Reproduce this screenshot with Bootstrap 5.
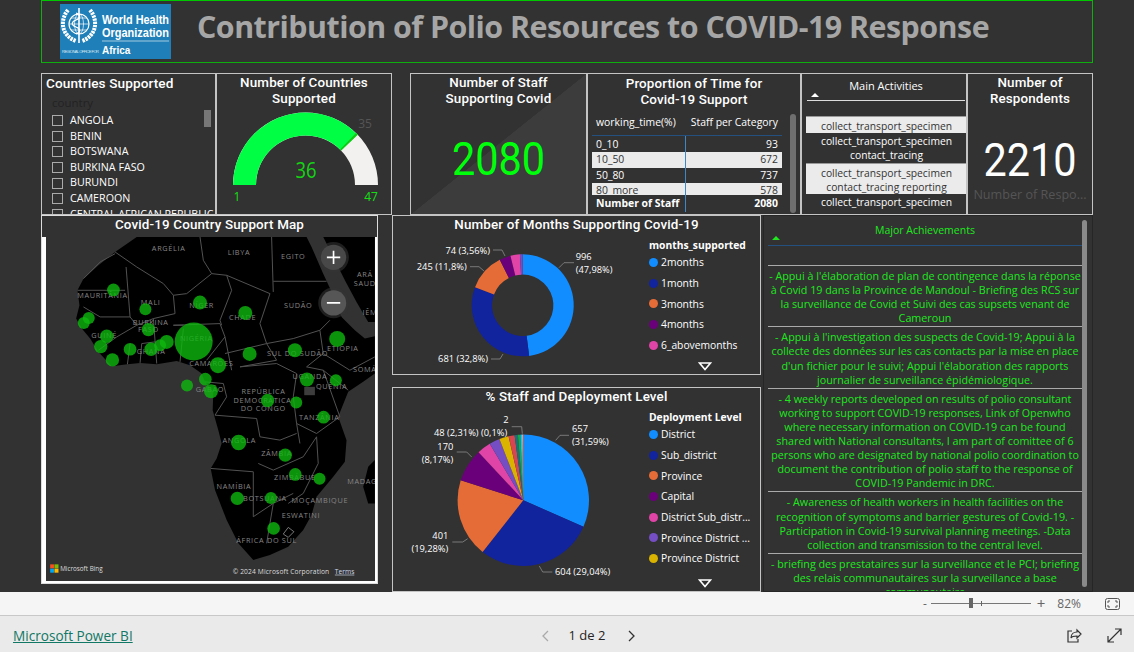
<!DOCTYPE html>
<html lang="en">
<head>
  <meta charset="UTF-8">
  <meta name="viewport" content="width=device-width, initial-scale=1.0">
  <title>Contribution of Polio Resources to COVID-19 Response</title>
  <link href="https://cdn.jsdelivr.net/npm/bootstrap@5.3.0/dist/css/bootstrap.min.css" rel="stylesheet">
  <style>
    html, body { height: 652px; overflow: hidden; }
    body { background: #323232; font-family: "Open Sans", sans-serif; color: #fff; }
    .report { height: 592px; padding-left: 41px; width: 1093px; box-sizing: content-box; overflow: hidden; }
    .report-head { height: 63px; width: 1052px; border: 1px solid #0fae0f; border-top-color: #00c800; padding-left: 18px; }
    .report-title { font-size: 30.4px; letter-spacing: -.52px; font-weight: 700; color: #a6a6a6; margin: 0 0 9px 26px; white-space: nowrap; }
    .row-top { height: 142px; margin-top: 10px; }
    .row-main { height: 377px; }
    .tile { border: 1px solid #c4c4c4; overflow: hidden; flex: none; }
    .tile-title { font-family: Roboto, sans-serif; font-weight: 500; font-size: 13.4px; line-height: 16px; letter-spacing: .15px; text-align: center; margin: 0; }
    .t-countries { width: 175px; padding: 1px 0 0 4px; }
    .t-gauge { width: 176px; padding-top: 1px; }
    .t-gauge svg { margin-top: 1px; }
    .t-staff { width: 177px; margin-left: 18px; padding-top: 1px; background: linear-gradient(to bottom right, #323232 50%, #3c3c3c 50.2%); }
    .t-time { width: 214px; padding-top: 2px; }
    .t-activities { width: 166px; }
    .t-respondents { width: 126px; padding-top: 1px; }
    .left-title { text-align: left; font-size: 13.6px; line-height: 17px; letter-spacing: .1px; }
    .slicer-label { color: #222; font-size: 11.5px; line-height: 14px; margin: 4px 0 3px 6px; }
    .slicer-row { height: 15.6px; font-size: 10.7px; line-height: 15.6px; padding-left: 6px; white-space: nowrap; }
    .check-box { width: 11px; height: 11px; border: 1px solid #aaa; margin-right: 7px; flex: none; }
    .slicer-thumb { width: 7px; height: 17px; background: #777; top: 36px; right: 4px; }
    .big-number { font-family: Roboto, sans-serif; font-size: 46px; line-height: 50px; text-align: center; transform: scaleX(.9); }
    .big-green { color: #00ff0a; margin-top: 27px; }
    .big-white { margin-top: 28px; }
    .big-caption { color: #555; font-size: 12.6px; line-height: 14px; margin-top: 3px; text-align: center; white-space: nowrap; }
    .time-table { width: 190px; margin: 1px 0 0 4px; font-size: 10.4px; position: relative; }
    .time-row { height: 15.4px; line-height: 15.4px; padding: 0 4px; }
    .time-head { height: 27px; line-height: 26px; border-bottom: 1px solid #24507f; margin-bottom: 1px; white-space: nowrap; padding: 0 4px; }
    .time-light { background: #ebebeb; color: #333; }
    .time-divider { width: 1px; background: #3f86c8; left: 93px; top: 27px; height: 76px; }
    .time-total { font-weight: 700; height: 18px; line-height: 17px; padding: 0 4px; }
    .time-clip-last { height: 12px; overflow: hidden; background: #ebebeb; color: #333; line-height: 15.4px; padding: 0 4px; }
    .scroll-bar { background: #6f6f6f; border-radius: 3px; }
    .sb-time { width: 6px; height: 99px; top: 40px; right: 4px; }
    .act-head { height: 27px; margin: 0 0 0 5px; width: 158px; border-bottom: 1px solid #ddd; font-size: 11px; text-align: center; line-height: 24px; position: relative; }
    .sort-up { width: 0; height: 0; border-left: 4px solid transparent; border-right: 4px solid transparent; border-bottom: 4px solid #fff; left: 4px; top: 19px; }
    .act-list { margin: 15px 0 0 4px; width: 161px; font-size: 10.3px; line-height: 14px; text-align: center; color: #fff; }
    .act-item { padding: 1px 0; white-space: nowrap; }
    .act-light { background: #ebebeb; color: #333; border-top: 1px solid #999; padding: 2px 0 0; }
    .t-map { width: 337px; height: 369px; background: #fff; border-color: #ddd; }
    .map-title { background: #323232; height: 21px; line-height: 18px; }
    .map-svg { display: block; margin: 0 3px 0 4px; background: #323232; }
    .mid-col { width: 369px; margin-left: 14px; }
    .t-months { height: 160px; }
    .t-level { height: 205px; margin-top: 12px; }
    .chart-title { height: 21px; line-height: 18px; margin-bottom: 1px; }
    .legend-col { font-size: 10.3px; line-height: 14px; width: 110px; white-space: nowrap; }
    .legend-name { font-weight: 700; }
    .legend-dot { width: 9px; height: 9px; border-radius: 50%; margin-right: 3px; flex: none; }
    .legend-item { height: 20.7px; }
    .legend-down { width: 14px; height: 9px; left: 305px; }
    .down-months { top: 146px; }
    .down-level { top: 191px; }
    .t-major { width: 330px; margin-left: 2px; color: #1fe81f; border-color: #262626; height: 377px; }
    .major-wrap { width: 314px; margin-left: 4px; font-size: 10.75px; line-height: 14.1px; text-align: center; }
    .major-head { height: 30px; line-height: 29px; font-size: 10.5px; border-bottom: 1px solid #24507f; position: relative; }
    .sort-green { border-bottom-color: #1fe81f; left: 4px; top: 20px; }
    .major-gap { height: 20px; border-bottom: 1px solid #aaa; }
    .major-item { padding: 3px 0 1px; border-bottom: 1px solid #aaa; }
    .sb-major { width: 5px; top: 4px; bottom: 4px; right: 5px; background: #8a8a8a; }
    .bar-zoom { height: 23px; background: #f5f5f5; color: #666; font-size: 12px; line-height: 1; padding-right: 14px; }
    .slider-track { width: 100px; height: 1px; background: #777; position: relative; margin: 0 6px 0 4px; }
    .slider-thumb { width: 4px; height: 10px; background: #666; left: 38px; top: -5px; }
    .slider-tick { width: 1px; height: 5px; background: #666; left: 50px; top: -2px; }
    .zoom-plus { font-size: 15px; }
    .zoom-pct { margin-left: 12px; }
    .zoom-fit { margin-left: 24px; }
    .bar-pages { height: 37px; background: #eaeaea; border-top: 1px solid #c8c8c8; color: #252423; padding: 3px 12px 0 0; }
    .pbi-link { color: #117865; font-size: 13.6px; width: 541px; padding-left: 13px; margin-top: 1px; }
    .page-label { font-size: 13px; width: 72px; margin-right: 3px; text-align: center; }
    .share-gap { margin-left: 25px; }
    .tile svg text { font-family: "Open Sans", sans-serif; }
  </style>
</head>
<body>

<div class="report">
  <div class="report-head d-flex align-items-center">
    <svg width="111" height="55" viewBox="0 0 111 55">
      <rect width="111" height="55" fill="#1f7fb8"/>
      <g fill="none" stroke="#fff">
        <circle cx="19" cy="20" r="10" stroke-width="1.2"/>
        <ellipse cx="19" cy="20" rx="4.5" ry="10" stroke-width=".7"/>
        <path d="M9 20h20M11 14h16M11 26h16" stroke-width=".7"/>
        <path d="M19 4v35" stroke-width="1.6"/>
        <path d="M16 9c5 2 5 5 0 7s-5 5 0 7 5 5 0 7" stroke-width="1.2"/>
        <path d="M8 6C-1 17 2 32 16 37M30 6c9 11 6 26-8 31" stroke-width="4" stroke-dasharray="2.4 .8"/>
      </g>
      <text x="42" y="20" font-family="Liberation Sans, sans-serif" font-size="12.6" font-weight="700" fill="#fff" textLength="67" lengthAdjust="spacingAndGlyphs">World Health</text>
      <text x="42" y="33" font-family="Liberation Sans, sans-serif" font-size="12.6" font-weight="700" fill="#fff" textLength="67" lengthAdjust="spacingAndGlyphs">Organization</text>
      <path d="M42 37h67" stroke="#fff" stroke-width=".6"/>
      <text x="2" y="49" font-family="Liberation Sans, sans-serif" font-size="4" fill="#dbe9f3" textLength="37">REGIONAL OFFICE FOR</text>
      <text x="42" y="50" font-family="Liberation Sans, sans-serif" font-size="10" font-weight="700" fill="#fff">Africa</text>
    </svg>
    <h1 class="report-title">Contribution of Polio Resources to COVID-19 Response</h1>
  </div>

  <div class="row-top d-flex">
    <div class="tile t-countries position-relative">
      <p class="tile-title left-title">Countries Supported</p>
      <div class="slicer-label">country</div>
      <div id="slicer"></div>
      <div class="slicer-thumb position-absolute"></div>
    </div>

    <div class="tile t-gauge">
      <p class="tile-title">Number of Countries<br>Supported</p>
      <svg id="gauge" width="174" height="106" viewBox="216 108 174 106" class="d-block"></svg>
    </div>

    <div class="tile t-staff">
      <p class="tile-title">Number of Staff<br>Supporting Covid</p>
      <div class="big-number big-green">2080</div>
    </div>

    <div class="tile t-time position-relative">
      <p class="tile-title">Proportion of Time for<br>Covid-19 Support</p>
      <div class="time-table">
        <div class="time-head d-flex justify-content-between"><span>working_time(%)</span><span>Staff per Category</span></div>
        <div class="time-row d-flex justify-content-between"><span>0_10</span><span>93</span></div>
        <div class="time-row time-light d-flex justify-content-between"><span>10_50</span><span>672</span></div>
        <div class="time-row d-flex justify-content-between"><span>50_80</span><span>737</span></div>
        <div class="time-clip-last d-flex justify-content-between"><span>80_more</span><span>578</span></div>
        <div class="time-total d-flex justify-content-between"><span>Number of Staff</span><span>2080</span></div>
        <div class="time-divider position-absolute"></div>
      </div>
      <div class="scroll-bar sb-time position-absolute"></div>
    </div>

    <div class="tile t-activities">
      <div class="act-head">Main Activities<span class="sort-up position-absolute"></span></div>
      <div class="act-list">
        <div class="act-item act-light">collect_transport_specimen</div>
        <div class="act-item">collect_transport_specimen<br>contact_tracing</div>
        <div class="act-item act-light">collect_transport_specimen<br>contact_tracing reporting</div>
        <div class="act-item">collect_transport_specimen</div>
      </div>
    </div>

    <div class="tile t-respondents">
      <p class="tile-title">Number of<br>Respondents</p>
      <div class="big-number big-white">2210</div>
      <div class="big-caption">Number of Respo...</div>
    </div>
  </div>

  <div class="row-main d-flex">
    <div class="tile t-map">
      <p class="tile-title map-title">Covid-19 Country Support Map</p>
      <svg id="map" class="map-svg" width="329" height="344" viewBox="18 80 987 1033"></svg>
    </div>

    <div class="mid-col">
      <div class="tile t-months position-relative">
        <p class="tile-title chart-title">Number of Months Supporting Covid-19</p>
        <div class="d-flex">
          <svg id="donut" width="256" height="137" viewBox="393 237 256 137"></svg>
          <div class="legend-col" id="legend-months"></div>
        </div>
        <svg class="legend-down down-months position-absolute" viewBox="0 0 14 9"><path d="M1.5 1h11L7 7.5z" fill="none" stroke="#fff" stroke-width="1.6"/></svg>
      </div>
      <div class="tile t-level position-relative">
        <p class="tile-title chart-title">% Staff and Deployment Level</p>
        <div class="d-flex">
          <svg id="pie" width="256" height="182" viewBox="393 409 256 182"></svg>
          <div class="legend-col" id="legend-level"></div>
        </div>
        <svg class="legend-down down-level position-absolute" viewBox="0 0 14 9"><path d="M1.5 1h11L7 7.5z" fill="none" stroke="#fff" stroke-width="1.6"/></svg>
      </div>
    </div>

    <div class="tile t-major position-relative">
      <div class="major-wrap">
        <div class="major-head">Major Achievements<span class="sort-up sort-green position-absolute"></span></div>
        <div class="major-gap"></div>
        <div id="major"></div>
      </div>
      <div class="scroll-bar sb-major position-absolute"></div>
    </div>
  </div>
</div>

<div class="bar-zoom d-flex align-items-center justify-content-end">
  <span>-</span>
  <div class="slider-track"><span class="slider-thumb position-absolute"></span><span class="slider-tick position-absolute"></span></div>
  <span class="zoom-plus">+</span>
  <span class="zoom-pct">82%</span>
  <svg class="zoom-fit" width="15" height="12" viewBox="0 0 15 12"><rect x=".5" y=".5" width="14" height="11" rx="2" fill="none" stroke="#555"/><path d="M3 5V3h2M10 3h2v2M12 7v2h-2M5 9H3V7" fill="none" stroke="#555"/></svg>
</div>
<div class="bar-pages d-flex align-items-center">
  <a href="#" class="pbi-link">Microsoft Power BI</a>
  <svg width="10" height="12" viewBox="0 0 10 12"><path d="M7 1 2 6l5 5" fill="none" stroke="#aaa" stroke-width="1.3"/></svg>
  <span class="page-label">1 de 2</span>
  <svg width="10" height="12" viewBox="0 0 10 12"><path d="M3 1l5 5-5 5" fill="none" stroke="#333" stroke-width="1.3"/></svg>
  <svg class="ms-auto" width="16" height="16" viewBox="0 0 16 16"><path d="M6 3H2v11h10v-3" fill="none" stroke="#333" stroke-width="1.2"/><path d="M5 10c0-4 3-6 6-6V2l4 4-4 4V8c-3 0-5 0-6 2z" fill="none" stroke="#333" stroke-width="1.2"/></svg>
  <svg class="share-gap" width="15" height="15" viewBox="0 0 15 15"><path d="M1 14 14 1M8 1h6v6M1 8v6h6" fill="none" stroke="#333" stroke-width="1.2"/></svg>
</div>

<script>
  const green = '#00ff44';

  // Slicer
  const countries = ['ANGOLA', 'BENIN', 'BOTSWANA', 'BURKINA FASO', 'BURUNDI', 'CAMEROON', 'CENTRAL AFRICAN REPUBLIC'];
  document.getElementById('slicer').innerHTML = countries.map(c =>
    `<div class="slicer-row d-flex align-items-center"><span class="check-box"></span>${c}</div>`).join('');

  // Achievements
  const achievements = [
    "- Appui à l'élaboration de plan de contingence dans la réponse à Covid 19 dans la Province de Mandoul - Briefing des RCS sur la surveillance de Covid et Suivi des cas supsets venant de Cameroun",
    "- Appui à l'investigation des suspects de Covid-19; Appui à la collecte des données sur les cas contacts par la mise en place d'un fichier pour le suivi; Appui l'élaboration des rapports journalier de surveillance épidémiologique.",
    "- 4 weekly reports developed on results of polio consultant working to support COVID-19 responses, Link of Openwho where necessary information on COVID-19 can be found shared with National consultants, I am part of comittee of 6 persons who are designated by national polio coordination to document the contribution of polio staff to the response of COVID-19 Pandemic in DRC.",
    "- Awareness of health workers in health facilities on the recognition of symptoms and barrier gestures of Covid-19. - Participation in Covid-19 survival planning meetings. -Data collection and transmission to the central level.",
    "- briefing des prestataires sur la surveillance et le PCI; briefing des relais communautaires sur la surveillance a base communautaire"
  ];
  document.getElementById('major').innerHTML = achievements.map(a => `<div class="major-item">${a}</div>`).join('');

  // Pie helpers: angles in degrees, clockwise from 12 o'clock
  function polar(cx, cy, r, a) {
    const t = (a - 90) * Math.PI / 180;
    return [(cx + r * Math.cos(t)).toFixed(2), (cy + r * Math.sin(t)).toFixed(2)];
  }
  function slice(cx, cy, R, r, a0, a1, fill) {
    const big = a1 - a0 > 180 ? 1 : 0;
    const [x0, y0] = polar(cx, cy, R, a0), [x1, y1] = polar(cx, cy, R, a1);
    if (r === 0) return `<path d="M${cx} ${cy}L${x0} ${y0}A${R} ${R} 0 ${big} 1 ${x1} ${y1}Z" fill="${fill}"/>`;
    const [x2, y2] = polar(cx, cy, r, a1), [x3, y3] = polar(cx, cy, r, a0);
    return `<path d="M${x0} ${y0}A${R} ${R} 0 ${big} 1 ${x1} ${y1}L${x2} ${y2}A${r} ${r} 0 ${big} 0 ${x3} ${y3}Z" fill="${fill}"/>`;
  }
  function slices(cx, cy, R, r, data) {
    let a = 0, out = '';
    data.forEach(([pct, fill]) => { out += slice(cx, cy, R, r, a, a + pct * 3.6, fill); a += pct * 3.6; });
    return out;
  }
  function labels(list) {
    return list.map(([x, y, txt, anchor]) =>
      `<text x="${x}" y="${y}" font-size="9.3" fill="#fff" text-anchor="${anchor || 'start'}" dominant-baseline="middle">${txt}</text>`).join('');
  }
  function leaders(list) {
    return list.map(p => `<polyline points="${p}" fill="none" stroke="#8a8a8a" stroke-width=".8"/>`).join('');
  }
  function legend(id, title, items) {
    document.getElementById(id).innerHTML = `<div class="legend-name">${title}</div>` + items.map(([name, fill]) =>
      `<div class="legend-item d-flex align-items-center"><span class="legend-dot" style="background:${fill}"></span>${name}</div>`).join('');
  }

  // Gauge
  const gaugeCx = 304.5, gaugeCy = 185;
  document.getElementById('gauge').innerHTML =
    slice(gaugeCx, gaugeCy, 72.5, 49.5, -90, 90, '#f2f1ef') +
    slice(gaugeCx, gaugeCy, 72.5, 49.5, -90, 46, green) +
    slice(gaugeCx, gaugeCy, 72.5, 49.5, 44.2, 46, '#14c814') +
    `<text x="364" y="125" font-size="12" fill="#555" text-anchor="middle" dominant-baseline="middle">35</text>
     <text x="305" y="172" font-size="21" fill="#14d414" text-anchor="middle" dominant-baseline="middle" textLength="21" lengthAdjust="spacingAndGlyphs">36</text>
     <text x="236" y="198" font-size="12" fill="#14e014" text-anchor="middle" dominant-baseline="middle">1</text>
     <text x="370" y="198" font-size="12" fill="#14e014" text-anchor="middle" dominant-baseline="middle">47</text>`;

  // Donut
  document.getElementById('donut').innerHTML =
    slices(522.7, 304.3, 51, 30.7, [[47.98, '#118dff'], [32.8, '#12239e'], [11.8, '#e66c37'], [3.56, '#6b007b'], [3.0, '#e044a7'], [0.86, '#744ec2']]) +
    leaders(['574,261.7 564,261.7 559,266.7', '493,249 502,249 505,255', '470,265.7 479,265.7 484,270', '491,358 500,358 503,353']) +
    labels([[575.7, 256.7, '996'], [575.7, 270, '(47,98%)'], [490, 250.7, '74 (3,56%)', 'end'], [466.7, 267, '245 (11,8%)', 'end'], [488, 358.7, '681 (32,8%)', 'end']]);
  legend('legend-months', 'months_supported', [['2months', '#118dff'], ['1month', '#12239e'], ['3months', '#e66c37'], ['4months', '#6b007b'], ['6_abovemonths', '#e044a7']]);

  // Pie
  document.getElementById('pie').innerHTML =
    slices(523.3, 499.3, 65.7, 0, [[31.59, '#118dff'], [29.04, '#12239e'], [19.28, '#e66c37'], [8.17, '#6b007b'], [3.4, '#e044a7'], [2.6, '#744ec2'], [2.31, '#d9b300'], [1.5, '#d64550'], [0.8, '#197278'], [0.6, '#1aab40'], [0.4, '#15c6f4'], [0.31, '#f0a090']]) +
    leaders(['511.7,425.7 521.7,425.7 522.3,432.7', '456.7,451 466.7,451 471.7,456', '452.3,541 462.7,541 467.7,537.7', '569,434.3 560,434.3 555.7,439.3', '552.3,571 542.7,571 539.3,565']) +
    labels([[506, 419.7, '2', 'middle'], [434, 433, '48 (2,31%) (0,1%)'], [453.3, 446.7, '170', 'end'], [453.3, 460, '(8,17%)', 'end'], [448.3, 535.7, '401', 'end'], [448.3, 549, '(19,28%)', 'end'], [572, 428.7, '657'], [572, 442, '(31,59%)'], [555, 571.7, '604 (29,04%)']]);
  legend('legend-level', 'Deployment Level', [['District', '#118dff'], ['Sub_district', '#12239e'], ['Province', '#e66c37'], ['Capital', '#6b007b'], ['District Sub_distr...', '#e044a7'], ['Province District ...', '#744ec2'], ['Province District', '#d9b300']]);

  // Map, in coordinates of a 3x crop of the reference
  const bubbles = [[220,239,19],[316,297,18],[480,277,21],[616,308,21],[146,323,18],[131,338,18],[200,378,20],[182,409,20],[217,449,20],[270,417,19],[325,358,20],[333,417,20],[360,405,18],[380,395,21],[461,394,57],[534,465,24],[629,431,21],[765,420,21],[892,386,24],[801,508,21],[888,510,18],[496,507,19],[441,526,18],[513,543,21],[683,571,20],[769,577,18],[851,621,19],[596,697,23],[736,735,20],[766,793,19],[839,806,18],[592,865,20],[693,864,18],[701,955,19]];
  const places = [['ARGÉLIA',386,115],['LIBYA',597,129],['EGITO',760,140],['ARÁ',975,193],['SAUD',975,222],['MAURITÂNIA',187,258],['MALI',332,278],['NÍGER',485,288],['SUDÃO',775,288],['CHADE',608,322],['IÊM',990,308],['BURKINA',332,338],['FASO',325,358],['GUINÉ',192,378],['NIGÉRIA',469,387],['GHANA',333,427],['ETIÓPIA',909,416],['SUL DO SUDÃO',773,432],['CAMARÕES',514,461],['SOMÁ',975,480],['UGANDA',810,502],['QUÊNIA',875,531],['GABÃO',510,541],['REPÚBLICA',671,547],['DEMOCRÁTICA',668,573],['DO CONGO',670,598],['TANZÂNIA',838,623],['ANGOLA',598,693],['ZÂMBIA',710,733],['ZIMBÁBUE',765,803],['MADAGÁ',975,817],['NAMÍBIA',582,830],['BOTSUANA',675,866],['MOÇAMBIQUE',840,872],['ESWATINI',783,919],['ÁFRICA DO SUL',680,992]];
  const borders = [
    '225,125 290,170 370,220 400,255 440,250 515,190','130,205 180,155 225,130','258,170 270,320 180,320 130,290','112,240 255,240',
    '480,80 490,150 515,190 560,195','695,80 700,245','560,195 690,250','700,213 860,213','560,195 575,240 540,330 545,345',
    '400,255 405,310 340,325 290,345 270,320','690,250 660,340 680,400','680,400 760,385 840,360','870,330 840,360 850,430 930,480',
    '400,345 540,340 555,380 500,450','555,380 575,480','555,430 680,400 710,450 600,470','600,470 710,460 770,490','770,490 760,560 770,640 780,700',
    '525,615 650,625 660,680 720,690 770,670','512,775 640,785','640,785 640,920 700,880 760,850','655,760 700,780 790,740','770,640 830,670 900,620',
    '790,740 830,680 835,760 790,850 745,880','700,880 680,1000','850,430 800,470 850,480 925,540','850,480 900,620','430,355 420,455','340,325 350,460','270,400 262,462','175,420 230,380 290,345','495,515 550,520 560,560 525,615','930,480 1005,440','430,345 400,345','300,458 305,400 345,395'
  ];
  document.getElementById('map').innerHTML = `
    <path d="M290 80 225 125 175 165 130 205 112 240 118 285 108 325 125 355 150 385 175 425 215 468 262 462 300 458 350 462 410 452 450 465 485 490 495 515 520 545 518 600 535 660 545 700 530 745 512 775 525 840 560 930 595 1000 640 1050 690 1035 745 1010 790 960 815 915 830 860 880 800 915 755 920 690 895 620 925 545 970 515 1005 490 1005 378 975 385 945 360 905 320 880 255 850 190 815 110 800 80Z" fill="#000"/>
    <path d="M850 80 885 150 915 210 950 275 985 335 1005 335V80Z" fill="#000"/>
    <path d="M1005 750 985 770 970 830 985 880 1005 880Z" fill="#000"/>
    <rect x="793" y="530" width="32" height="25" fill="#3d3d3d"/>
    ${borders.map(b => `<polyline points="${b}" fill="none" stroke="#525252" stroke-width="3"/>`).join('')}
    <path d="M730 972 745 952 762 965 745 982Z" fill="none" stroke="#777" stroke-width="3"/>
    ${places.map(([n, x, y]) => `<text x="${x}" y="${y}" font-size="22" fill="#868686" letter-spacing="2" text-anchor="middle" dominant-baseline="middle">${n}</text>`).join('')}
    ${bubbles.map(([x, y, r]) => `<circle cx="${x}" cy="${y}" r="${r}" fill="#0fb80f" fill-opacity=".8"/>`).join('')}
    <circle cx="881" cy="141" r="46" fill="#333" fill-opacity=".6"/><circle cx="881" cy="141" r="38" fill="#484848"/>
    <circle cx="881" cy="278" r="46" fill="#333" fill-opacity=".6"/><circle cx="881" cy="278" r="38" fill="#565656"/>
    <path d="M861 141h40M881 121v40M861 278h40" stroke="#fff" stroke-width="5"/>
    <rect x="30" y="1063" width="12" height="12" fill="#f25022"/><rect x="43" y="1063" width="12" height="12" fill="#7fba00"/>
    <rect x="30" y="1076" width="12" height="12" fill="#00a4ef"/><rect x="43" y="1076" width="12" height="12" fill="#ffb900"/>
    <text x="60" y="1083" font-size="19" fill="#ddd">Microsoft Bing</text>
    <text x="578" y="1091" font-size="20" fill="#ddd" textLength="290">© 2024 Microsoft Corporation</text>
    <text x="885" y="1091" font-size="20" fill="#cfd8ea" text-decoration="underline">Terms</text>`;
</script>

</body>
</html>
